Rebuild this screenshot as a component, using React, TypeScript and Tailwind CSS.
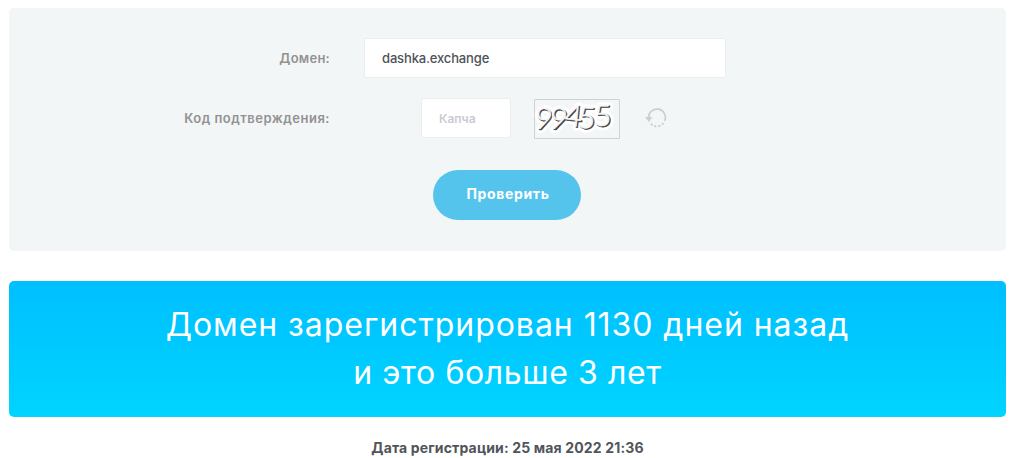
import { useState } from "react";

const digits = [
  { char: "9", x: 2, y: 31, rotate: 8 },
  { char: "9", x: 17, y: 31, rotate: 10 },
  { char: "4", x: 32, y: 28, rotate: 6 },
  { char: "5", x: 45, y: 30, rotate: 4 },
  { char: "5", x: 61, y: 28, rotate: 0 },
];

function CaptchaDigits({ className, offset }: { className: string; offset: number }) {
  return (
    <g className={className} transform={`translate(${offset} ${offset})`}>
      {digits.map((d, i) => (
        <text key={i} x={d.x} y={d.y} transform={`rotate(${d.rotate} ${d.x + 8} ${d.y - 12})`}>
          {d.char}
        </text>
      ))}
    </g>
  );
}

function Captcha() {
  return (
    <svg width="86" height="40" viewBox="1 1 84 38" className="ml-[23px] mt-px overflow-visible rounded-[1px] border border-[#cfd2d5] font-['Lato',sans-serif] text-[30px] font-light">
      <CaptchaDigits className="fill-white stroke-white stroke-[7px] [stroke-linejoin:round]" offset={0} />
      <CaptchaDigits className="fill-[#444] stroke-[#444] stroke-[0.8px]" offset={0.2} />
      <CaptchaDigits className="fill-[#f8f8f8] stroke-[#f8f8f8] stroke-[0.6px]" offset={-1} />
    </svg>
  );
}

function RefreshIcon() {
  return (
    <svg width="22" height="20" viewBox="0 0 22 20" fill="none" stroke="#cbced4">
      <path d="M3.6 10a8.4 8.4 0 1 1 16 3" strokeWidth="1.7" />
      <path d="M18.4 15.2A8.4 8.4 0 0 1 4.8 14.6" strokeWidth="2" strokeDasharray="2 2" />
      <path d="M0 9h7.5l-3.6 5z" fill="#cbced4" stroke="none" />
    </svg>
  );
}

export default function App() {
  const [domain, setDomain] = useState("dashka.exchange");
  const [code, setCode] = useState("");

  return (
    <div className="h-[458px] overflow-hidden bg-white pl-[9px] pr-[23px] pt-2 font-['Inter','Noto_Sans',sans-serif]">
      <form className="h-[243px] rounded-[5px] bg-[#f3f6f7] pt-[30px]" onSubmit={(e) => e.preventDefault()}>
        <div className="flex h-10 items-center">
          <label htmlFor="domain" className="w-[321px] pt-0.5 text-right text-[13px] font-semibold tracking-[0.25px] text-[#929292]">
            <span>Домен:</span>
          </label>
          <input
            id="domain"
            value={domain}
            onChange={(e) => setDomain(e.target.value)}
            className="ml-[34px] h-10 w-[362px] rounded-[2px] border border-[#ebeef0] bg-white px-[17px] text-[13px] font-medium tracking-[-0.15px] text-[#4d5259] outline-none"
          />
        </div>
        <div className="mt-5 flex h-10 items-center">
          <label htmlFor="code" className="w-[321px] pt-0.5 text-right text-[13px] font-semibold tracking-[0.5px] text-[#929292]">
            <span>Код подтверждения:</span>
          </label>
          <input
            id="code"
            value={code}
            placeholder="Капча"
            onChange={(e) => setCode(e.target.value)}
            className="ml-[91px] h-10 w-[90px] rounded-[2px] border border-[#ebeef0] bg-white px-[17px] text-[12px] font-medium text-[#4d5259] outline-none placeholder:font-semibold placeholder:text-[#c9ccd2]"
          />
          <Captcha />
          <button type="button" className="ml-[25px]" aria-label="Обновить">
            <RefreshIcon />
          </button>
        </div>
        <button type="submit" className="ml-[424px] mt-8 block h-[50px] w-[148px] rounded-full bg-[#55c4ed] pb-0.5 pl-0.5 text-sm font-bold tracking-[0.65px] text-white">
          <span>Проверить</span>
        </button>
      </form>

      <div className="mt-[30px] h-[136px] rounded-[5px] bg-linear-to-b from-[#00bfff] to-[#00d4ff] pt-5 text-center text-[32px] leading-[48px] text-white">
        <p className="tracking-[0.95px]"><span>Домен зарегистрирован 1130 дней назад</span></p>
        <p className="tracking-[0.6px]"><span>и это больше 3 лет</span></p>
      </div>

      <p className="mt-[21px] text-center text-sm font-bold tracking-[0.15px] text-[#50555b]">
        <span>Дата регистрации: 25 мая 2022 21:36</span>
      </p>
    </div>
  );
}
